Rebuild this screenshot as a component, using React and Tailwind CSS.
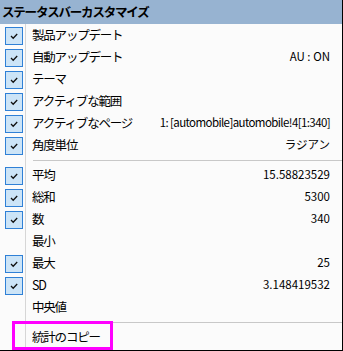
import React from "react";

const JP = { fontFamily: '"Noto Sans CJK JP", "Noto Sans", sans-serif' };

function Check() {
  return (
    <div className="shrink-0 w-[18px] h-[18px] border border-solid border-[#2f80d6] bg-[#cce4f7] flex items-center justify-center">
      <svg width="10" height="8" viewBox="0 0 10 8">
        <polyline points="2,4 4.2,6.2 8.2,2" fill="none" stroke="#111" strokeWidth="1.3" />
      </svg>
    </div>
  );
}

function Row({ label, value, checked, tight }) {
  return (
    <div className="h-[22px] flex items-center">
      <div className="shrink-0 w-[25px] flex items-center pl-[5px] pt-[1px]">{checked && <Check />}</div>
      <div className="shrink-0 w-px self-stretch bg-[#d6d6d6]" />
      <div className="flex-1 flex items-center justify-between pl-[6px] pr-[12px]">
        <span className="text-[12.5px] tracking-[-1.2px] text-black leading-none" style={JP}>{label}</span>
        {value && (
          <span
            className={tight ? "text-[11.5px] tracking-[-0.6px] text-black leading-none" : "text-[11.5px] text-black leading-none"}
            style={JP}
          >
            {value}
          </span>
        )}
      </div>
    </div>
  );
}

function Sep() {
  return (
    <div className="h-[8px] flex">
      <div className="shrink-0 w-[25px]" />
      <div className="shrink-0 w-px bg-[#d6d6d6]" />
      <div className="flex-1 flex items-center pl-[7px]">
        <div className="h-px w-full bg-[#c8c8c8]" />
      </div>
    </div>
  );
}

export default function App() {
  const top = [
    ["製品アップデート", "", true],
    ["自動アップデート", "AU : ON", true],
    ["テーマ", "", true],
    ["アクティブな範囲", "", true],
    ["アクティブなページ", "1: [automobile]automobile!4[1:340]", true, true],
    ["角度単位", "ラジアン", true],
  ];
  const stats = [
    ["平均", "15.58823529", true],
    ["総和", "5300", true],
    ["数", "340", true],
    ["最小", "", false],
    ["最大", "25", true],
    ["SD", "3.148419532", true],
    ["中央値", "", false],
  ];
  return (
    <div className="relative w-[343px] h-[351px] bg-[#fbfbfb] border-r border-b border-solid border-black flex flex-col">
      <div className="h-[24px] bg-[#97b3d1] flex items-center pl-[2px]">
        <span className="text-[12.5px] font-bold tracking-[-1.2px] text-black" style={JP}>
          ステータスバーカスタマイズ
        </span>
      </div>
      {top.map(([l, v, c, t]) => (
        <Row key={l} label={l} value={v} checked={c} tight={t} />
      ))}
      <Sep />
      {stats.map(([l, v, c]) => (
        <Row key={l} label={l} value={v} checked={c} />
      ))}
      <Sep />
      <Row label="統計のコピー" value="" checked={false} />
      <div className="flex-1 flex">
        <div className="shrink-0 w-[25px]" />
        <div className="shrink-0 w-px bg-[#d6d6d6]" />
      </div>
      <div className="absolute left-[12px] top-[321px] w-[101px] h-[29px] border-[3px] border-solid border-[#ff00ff]" />
    </div>
  );
}
